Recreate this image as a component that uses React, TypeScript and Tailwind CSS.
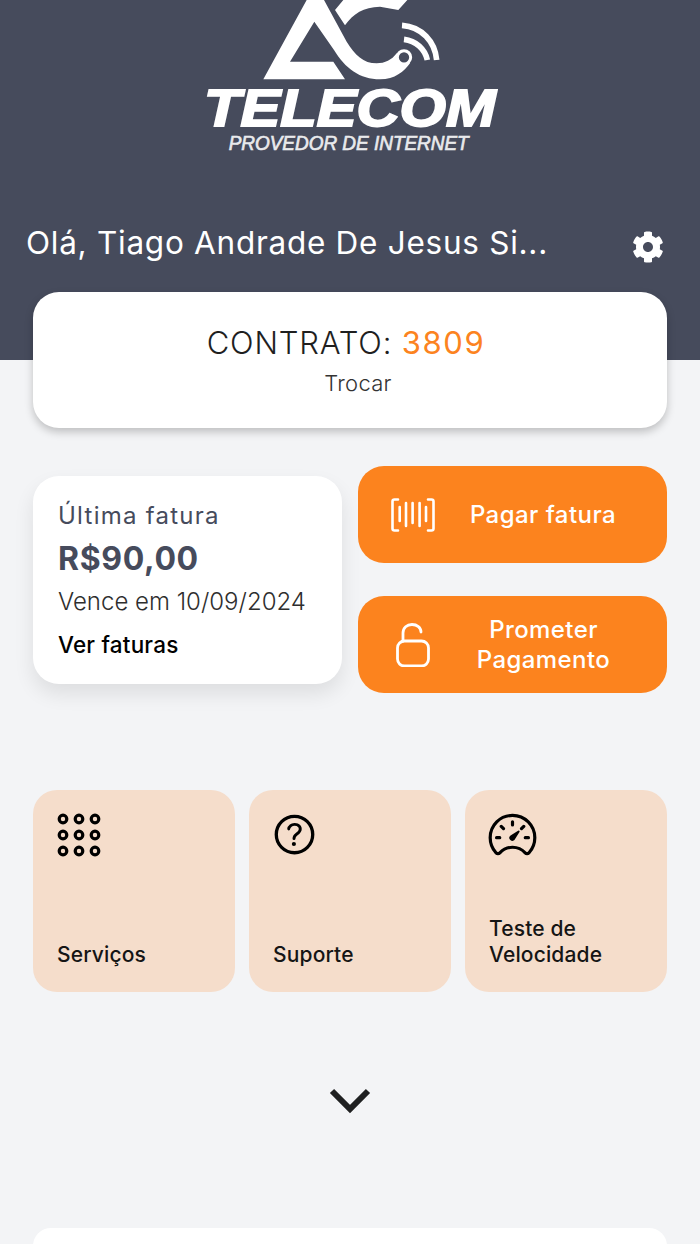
import { FaCog } from "react-icons/fa";
import { IoHelpCircleOutline, IoSpeedometerOutline } from "react-icons/io5";

function Logo() {
  return (
    <svg viewBox="0 0 1020 510" className="block w-[340px] h-[170px]" fill="none">
      <path fill="#fff" fillRule="evenodd" d="M380 0 L250 238 H495 L460 185 H330 L403 65 L462 150 C495 205 540 238 600 238 C645 238 672 215 690 190 L650 160 C635 180 615 190 590 190 C550 190 525 165 500 125 L432 0 Z" />
      <path fill="#fff" d="M465 30 L495 76 C520 40 550 22 600 20 L655 30 L682 0 H490 Z" />
      <circle cx="672" cy="172" r="20" fill="#464b5c" stroke="#fff" strokeWidth="9" />
      <path d="M672 118 C708 122 735 148 742 180" stroke="#fff" strokeWidth="17" />
      <path d="M666 76 C725 80 765 125 770 180" stroke="#fff" strokeWidth="17" />
      <text x="72" y="378" textLength="875" lengthAdjust="spacingAndGlyphs" fill="#fff" stroke="#fff" strokeWidth="6" fontFamily="'Liberation Sans', sans-serif" fontWeight="700" fontStyle="italic" fontSize="158">TELECOM</text>
      <text x="146" y="449" textLength="720" lengthAdjust="spacingAndGlyphs" fill="#e9eaec" stroke="#e9eaec" strokeWidth="2" fontFamily="'Liberation Sans', sans-serif" fontStyle="italic" fontWeight="400" fontSize="60">PROVEDOR DE INTERNET</text>
    </svg>
  );
}

function Barcode() {
  return (
    <svg viewBox="0 0 44 34" className="w-[44px] h-[34px]" fill="none" stroke="#fff" strokeWidth="2.6" strokeLinecap="round" strokeLinejoin="round">
      <path d="M7 1.5 H3.5 Q1.5 1.5 1.5 3.5 V30.5 Q1.5 32.5 3.5 32.5 H7" />
      <path d="M37 1.5 H40.5 Q42.5 1.5 42.5 3.5 V30.5 Q42.5 32.5 40.5 32.5 H37" />
      <path d="M8.7 9 V23 M15 5 V28 M21.6 5 V25 M28.6 5 V28 M35 9 V23" />
    </svg>
  );
}

function Unlock() {
  return (
    <svg viewBox="0 0 34 44" className="w-[34px] h-[44px]" fill="none" stroke="#fff" strokeWidth="2.8" strokeLinecap="round">
      <rect x="1.5" y="18" width="31" height="25" rx="7" />
      <path d="M7 18 V10 C7 4.5 11 1.5 16 1.5 C21 1.5 25 4.5 25 9" />
    </svg>
  );
}

function Dots() {
  const xs = [6, 22, 38];
  return (
    <svg viewBox="0 0 44 44" className="w-[44px] h-[44px] -mt-[1px]" fill="none" stroke="#000" strokeWidth="3.2">
      {xs.map((y) => xs.map((x) => <circle key={`${x}-${y}`} cx={x} cy={y} r="3.8" />))}
    </svg>
  );
}

function Tile({ label, icon }: { label: React.ReactNode; icon: React.ReactNode }) {
  return (
    <div className="h-[202px] rounded-[24px] bg-[#f5ddcb] pl-[24px] pr-3 pt-[24px] pb-[24px] flex flex-col justify-between">
      <div className="h-[44px] flex items-start">{icon}</div>
      <div className="text-[21px] leading-[26px] font-[450] tracking-[0.15px] text-[#151515]">{label}</div>
    </div>
  );
}

export default function App() {
  return (
    <div className="relative h-[1244px] w-[700px] overflow-hidden bg-[#f3f4f6] font-['Inter','Liberation_Sans',sans-serif]">
      <header className="h-[360px] bg-[#464b5c]">
        <div className="flex justify-center">
          <Logo />
        </div>
        <div className="mt-[49px] flex items-start justify-between pl-[26px] pr-[36px]">
          <div className="text-[31.5px] leading-[48px] tracking-[0.73px] text-white whitespace-nowrap">Olá, Tiago Andrade De Jesus Si...</div>
          <FaCog className="mt-[12px] text-white" size={32} />
        </div>
      </header>

      <main className="px-[33px]">
        <section className="-mt-[68px] relative h-[136px] rounded-[26px] bg-white shadow-[0_4px_8px_rgba(0,0,0,0.22)] flex flex-col items-center pt-[31px]">
          <div className="pr-2 text-[31px] leading-[40px] font-light text-[#1f1f1f] tracking-[0.8px]">
            CONTRATO: <span className="font-normal tracking-[1.6px] text-[#fc8320]">3809</span>
          </div>
          <div className="mt-[6px] pl-4 text-[22px] leading-[28px] font-light tracking-[0.3px] text-[#333]">Trocar</div>
        </section>

        <section className="mt-[38px] grid grid-cols-2 gap-x-[16px]">
          <div className="mt-[10px] h-[208px] rounded-[26px] bg-white shadow-[0_10px_20px_rgba(0,0,0,0.09)] pl-[25px] pt-[22px]">
            <div className="text-[24px] leading-[36px] tracking-[1.25px] text-[#464b5c]">Última fatura</div>
            <div className="mt-[5px] text-[32px] leading-[40px] font-bold text-[#464b5c] tracking-[0.65px]">R$90,00</div>
            <div className="mt-[5px] text-[24px] leading-[36px] font-light text-[#2e2e2e]">Vence em 10/09/2024</div>
            <div className="mt-[9px] text-[22.5px] leading-[32px] font-medium tracking-[0.2px] text-black">Ver faturas</div>
          </div>
          <div className="flex flex-col gap-[33px]">
            <div className="h-[97px] rounded-[26px] bg-[#fc831e] flex items-center pl-[33px] text-white">
              <Barcode />
              <div className="flex-1 pr-[16px] text-center text-[24px] leading-[30px] font-[450] tracking-[0.45px]">Pagar fatura</div>
            </div>
            <div className="h-[97px] rounded-[26px] bg-[#fc831e] flex items-center pl-[38px] text-white">
              <Unlock />
              <div className="flex-1 pr-[10px] text-center text-[24px] leading-[30px] font-[450] tracking-[0.4px]">Prometer<br />Pagamento</div>
            </div>
          </div>
        </section>

        <section className="mt-[97px] grid grid-cols-3 gap-x-[14px]">
          <Tile label="Serviços" icon={<Dots />} />
          <Tile label="Suporte" icon={<IoHelpCircleOutline size={53} className="-ml-[5px] -mt-[6px] shrink-0 text-black" />} />
          <Tile label={<>Teste de<br />Velocidade</>} icon={<IoSpeedometerOutline size={51} className="-ml-[2px] -mt-[5px] shrink-0 text-black" />} />
        </section>

        <div className="mt-[96px] flex justify-center">
          <svg viewBox="0 0 42 26" className="w-[42px] h-[26px]" fill="none" stroke="#1f2021" strokeWidth="6">
            <path d="M3 3 L21 21 L39 3" />
          </svg>
        </div>

        <div className="mt-[114px] h-[60px] rounded-[18px] bg-white" />
      </main>
    </div>
  );
}
